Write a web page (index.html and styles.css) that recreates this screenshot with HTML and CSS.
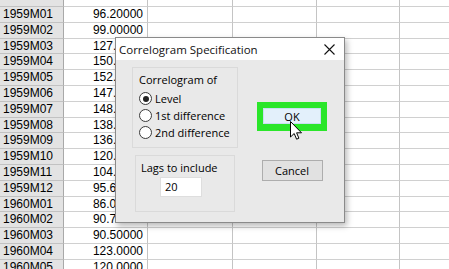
FILE: index.html
```html
<!DOCTYPE html>
<html>
<head>
<meta charset="utf-8">
<link rel="stylesheet" href="styles.css">
</head>
<body>
<div class="screen">
  <div class="sheet">
    <div class="row"><div class="lab"></div><div class="val"></div><div class="c1"></div><div class="c2"></div><div class="c3"></div><div class="c4"></div></div>
    <div class="row"><div class="lab">1959M01</div><div class="val">96.20000</div><div class="c1"></div><div class="c2"></div><div class="c3"></div><div class="c4"></div></div>
    <div class="row"><div class="lab">1959M02</div><div class="val">99.00000</div><div class="c1"></div><div class="c2"></div><div class="c3"></div><div class="c4"></div></div>
    <div class="row"><div class="lab">1959M03</div><div class="val">127.0000</div><div class="c1"></div><div class="c2"></div><div class="c3"></div><div class="c4"></div></div>
    <div class="row"><div class="lab">1959M04</div><div class="val">150.0000</div><div class="c1"></div><div class="c2"></div><div class="c3"></div><div class="c4"></div></div>
    <div class="row"><div class="lab">1959M05</div><div class="val">152.0000</div><div class="c1"></div><div class="c2"></div><div class="c3"></div><div class="c4"></div></div>
    <div class="row"><div class="lab">1959M06</div><div class="val">147.0000</div><div class="c1"></div><div class="c2"></div><div class="c3"></div><div class="c4"></div></div>
    <div class="row"><div class="lab">1959M07</div><div class="val">148.0000</div><div class="c1"></div><div class="c2"></div><div class="c3"></div><div class="c4"></div></div>
    <div class="row"><div class="lab">1959M08</div><div class="val">138.0000</div><div class="c1"></div><div class="c2"></div><div class="c3"></div><div class="c4"></div></div>
    <div class="row"><div class="lab">1959M09</div><div class="val">136.0000</div><div class="c1"></div><div class="c2"></div><div class="c3"></div><div class="c4"></div></div>
    <div class="row"><div class="lab">1959M10</div><div class="val">120.0000</div><div class="c1"></div><div class="c2"></div><div class="c3"></div><div class="c4"></div></div>
    <div class="row"><div class="lab">1959M11</div><div class="val">104.0000</div><div class="c1"></div><div class="c2"></div><div class="c3"></div><div class="c4"></div></div>
    <div class="row"><div class="lab">1959M12</div><div class="val">95.60000</div><div class="c1"></div><div class="c2"></div><div class="c3"></div><div class="c4"></div></div>
    <div class="row"><div class="lab">1960M01</div><div class="val">86.00000</div><div class="c1"></div><div class="c2"></div><div class="c3"></div><div class="c4"></div></div>
    <div class="row"><div class="lab">1960M02</div><div class="val">90.75000</div><div class="c1"></div><div class="c2"></div><div class="c3"></div><div class="c4"></div></div>
    <div class="row"><div class="lab">1960M03</div><div class="val">90.50000</div><div class="c1"></div><div class="c2"></div><div class="c3"></div><div class="c4"></div></div>
    <div class="row"><div class="lab">1960M04</div><div class="val">123.0000</div><div class="c1"></div><div class="c2"></div><div class="c3"></div><div class="c4"></div></div>
    <div class="row"><div class="lab">1960M05</div><div class="val">120.0000</div><div class="c1"></div><div class="c2"></div><div class="c3"></div><div class="c4"></div></div>
  </div>

  <div class="dialog">
    <div class="titlebar">
      <span class="title">Correlogram Specification</span>
      <svg class="close" width="11" height="11" viewBox="0 0 11 11"><path d="M0.5 0.5 L10.5 10.5 M10.5 0.5 L0.5 10.5" stroke="#111" stroke-width="1.1" fill="none"/></svg>
    </div>
    <div class="content">
      <div class="left">
        <div class="group g1">
          <div class="glabel">Correlogram of</div>
          <div class="radios">
            <div class="radio-row"><span class="radio on"></span><span>Level</span></div>
            <div class="radio-row"><span class="radio"></span><span>1st difference</span></div>
            <div class="radio-row"><span class="radio"></span><span>2nd difference</span></div>
          </div>
        </div>
        <div class="group g2">
          <div class="glabel">Lags to include</div>
          <div class="input">20</div>
        </div>
      </div>
      <div class="right">
        <div class="okwrap"><div class="btn ok">OK</div></div>
        <div class="btn cancel">Cancel</div>
      </div>
    </div>
  </div>

  <svg class="cursor" width="13" height="20" viewBox="0 0 13 20">
    <path d="M0.5 0.5 L0.5 16 L4.2 12.5 L6.6 18.2 L8.9 17.2 L6.6 11.8 L11.5 11.8 Z" fill="#fff" stroke="#000" stroke-width="1" stroke-linejoin="miter"/>
  </svg>
</div>
</body>
</html>
```

FILE: styles.css
```css
html, body {
  margin: 0;
  padding: 0;
}
body {
  width: 449px;
  height: 269px;
  overflow: hidden;
  background: #ffffff;
  font-family: "Liberation Sans", Arial, sans-serif;
}
.screen {
  position: relative;
  width: 449px;
  height: 269px;
  overflow: hidden;
}

/* spreadsheet */
.sheet {
  margin-top: -8.81px;
}
.row {
  display: flex;
  height: 15.81px;
}
.row > div {
  flex-shrink: 0;
  box-sizing: border-box;
  height: 100%;
  border-bottom: 1px solid #d0d0d0;
  border-right: 1px solid #c4c4c4;
  font-size: 12px;
  line-height: 14.81px;
  white-space: nowrap;
  overflow: hidden;
  color: #000;
}
.row > .lab {
  width: 64px;
  background: #e3e3e3;
  padding-left: 3px;
  border-right-color: #a9a9a9;
  border-bottom-color: #c2c2c2;
}
.row > .val {
  width: 84px;
  text-align: right;
  padding-right: 4px;
}
.row > .c1 { width: 85px; }
.row > .c2 { width: 84px; }
.row > .c3 { width: 83px; }
.row > .c4 { width: 84px; }

/* dialog */
.dialog {
  position: absolute;
  left: 115px;
  top: 37px;
  width: 230px;
  height: 186px;
  box-sizing: border-box;
  border: 1px solid #8a8a8a;
  background: #e9e9e9;
  box-shadow: 2px 3px 6px rgba(0, 0, 0, 0.28);
  font-family: "Open Sans", "Noto Sans", sans-serif;
  font-size: 11px;
  color: #000;
  display: flex;
  flex-direction: column;
}
.titlebar {
  height: 22px;
  flex-shrink: 0;
  background: #ffffff;
  display: flex;
  align-items: center;
  justify-content: space-between;
  padding: 0 9px 0 3px;
}
.title {
  font-size: 11.5px;
  color: #111;
}
.close {
  display: block;
}
.content {
  display: flex;
  padding: 7px 0 0 16px;
}
.left {
  display: flex;
  flex-direction: column;
  gap: 7px;
}
.group {
  box-sizing: border-box;
  border: 1px solid #dadada;
}
.glabel {
  line-height: 15px;
  white-space: nowrap;
}
.g1 {
  width: 106px;
  height: 81px;
  padding: 4px 0 0 6px;
}
.radios {
  margin-top: 3px;
  display: flex;
  flex-direction: column;
}
.radio-row {
  height: 17px;
  display: flex;
  align-items: center;
  gap: 3px;
  white-space: nowrap;
}
.radio {
  width: 13px;
  height: 13px;
  box-sizing: border-box;
  border: 1px solid #3a3a3a;
  border-radius: 50%;
  background: #fff;
  display: flex;
  align-items: center;
  justify-content: center;
  flex-shrink: 0;
}
.radio.on::after {
  content: "";
  width: 6px;
  height: 6px;
  border-radius: 50%;
  background: #222;
}
.g2 {
  width: 100px;
  height: 57px;
  margin-left: 3px;
  padding: 4px 0 0 5px;
}
.input {
  margin: 2px 0 0 19px;
  width: 42px;
  height: 20px;
  box-sizing: border-box;
  background: #fff;
  border: 1px solid #dedede;
  padding-left: 4px;
  line-height: 18px;
}
.right {
  margin-left: 19px;
  padding-top: 35px;
  display: flex;
  flex-direction: column;
  align-items: center;
}
.okwrap {
  border: 6px solid #2ae62a;
  border-bottom-width: 7px;
}
.btn {
  box-sizing: border-box;
  display: flex;
  align-items: center;
  justify-content: center;
}
.ok {
  width: 58px;
  height: 16px;
  background: #e3f0fb;
  border: 1px solid #c9def2;
}
.cancel {
  margin-top: 29px;
  width: 61px;
  height: 21px;
  background: #e1e1e1;
  border: 1px solid #adadad;
}

/* mouse pointer */
.cursor {
  position: absolute;
  left: 290px;
  top: 121px;
}
```
